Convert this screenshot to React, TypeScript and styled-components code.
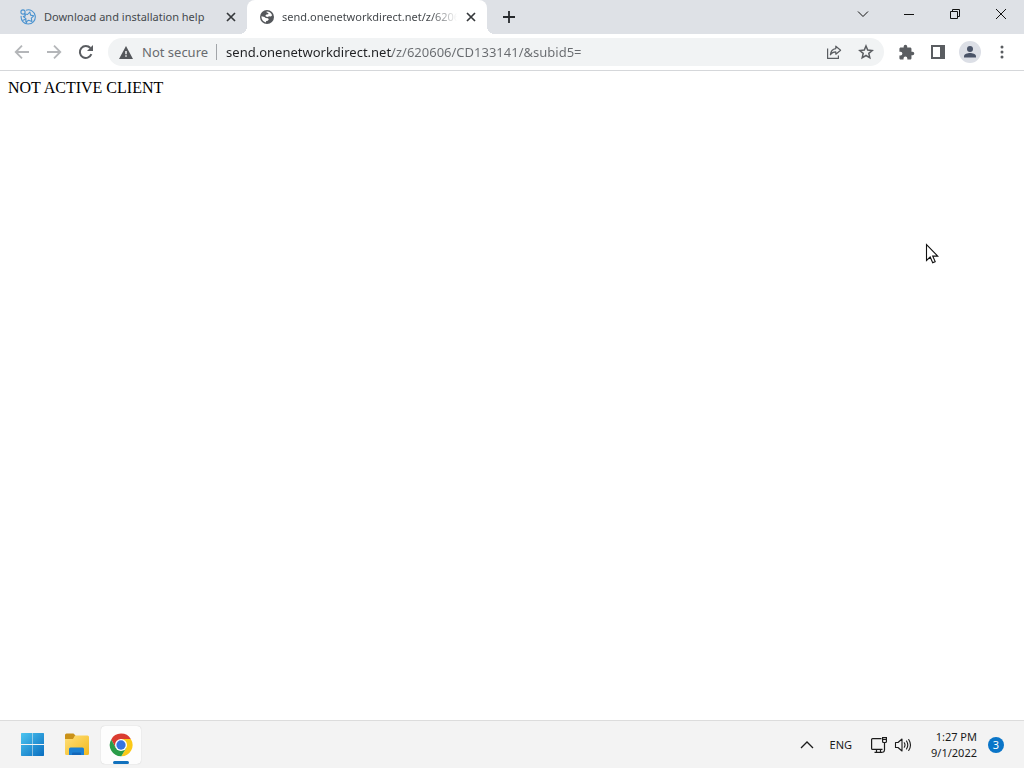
import React from "react";
import styled, { createGlobalStyle } from "styled-components";

const uiFont = `"Segoe UI", "Noto Sans", "Open Sans", sans-serif`;

const GlobalStyle = createGlobalStyle`
  * { box-sizing: border-box; }
  body { margin: 0; background: #fff; }
  button { font-family: inherit; }
`;

const Desktop = styled.div`
  display: flex;
  flex-direction: column;
  min-height: 100vh;
  font-family: ${uiFont};
  color: #202124;
`;

const TabStrip = styled.header`
  display: flex;
  height: 34px;
  background: #dee1e6;
`;

const TabList = styled.div`
  display: flex;
  flex: 1;
  min-width: 0;
  padding-left: 7px;
`;

const Tab = styled.div<{ $active?: boolean }>`
  position: relative;
  display: flex;
  align-items: center;
  width: 240px;
  padding: 0 8px 0 13px;
  border-radius: 8px 8px 0 0;
  background: ${(p) => (p.$active ? "#fff" : "transparent")};

  &::before,
  &::after {
    content: "";
    display: ${(p) => (p.$active ? "block" : "none")};
    position: absolute;
    bottom: 0;
    width: 8px;
    height: 8px;
  }
  &::before {
    left: -8px;
    background: radial-gradient(circle at 0 0, transparent 8px, #fff 8px);
  }
  &::after {
    right: -8px;
    background: radial-gradient(circle at 100% 0, transparent 8px, #fff 8px);
  }
`;

const TabTitle = styled.span<{ $fade?: boolean }>`
  flex: 1;
  min-width: 0;
  margin-left: 8px;
  overflow: hidden;
  white-space: nowrap;
  font-size: 11px;
  line-height: 16px;
  color: #45494d;
  ${(p) => p.$fade && "mask-image: linear-gradient(to right, #000 85%, transparent);"}
`;

const PlainButton = styled.button`
  display: flex;
  align-items: center;
  justify-content: center;
  flex: none;
  padding: 0;
  border: 0;
  background: transparent;
  color: inherit;
`;

const TabClose = styled(PlainButton)`
  width: 16px;
  height: 16px;
  margin-left: 6px;
`;

const NewTab = styled(PlainButton)`
  width: 28px;
  height: 34px;
  margin-left: 8px;
`;

const WindowButton = styled(PlainButton)`
  width: 46px;
  height: 28px;
  color: #111;
`;

const Toolbar = styled.nav`
  display: flex;
  align-items: center;
  height: 37px;
  padding: 0 6px;
  background: #fff;
  border-bottom: 1px solid #d5d7da;
`;

const ToolButton = styled(PlainButton)`
  width: 32px;
  height: 28px;
  color: #5a5d61;
  &:disabled { color: #b4b6b9; }
`;

const Omnibox = styled.form`
  display: flex;
  align-items: center;
  flex: 1;
  min-width: 0;
  height: 28px;
  margin: 0 6px;
  padding: 0 2px 0 11px;
  border-radius: 14px;
  background: #f1f3f4;
`;

const Security = styled(PlainButton)`
  gap: 9px;
  padding-right: 8px;
  font-size: 13px;
  line-height: 20px;
  color: #686b6f;
`;

const Divider = styled.span`
  width: 1px;
  height: 16px;
  margin-right: 9px;
  background: #a2a5a9;
`;

const Address = styled.input`
  flex: 1;
  min-width: 0;
  height: 20px;
  padding: 0;
  border: 0;
  outline: 0;
  font-family: inherit;
  font-size: 13px;
  line-height: 20px;
  color: #202124;
  background: linear-gradient(to right, #202124 166px, #686b6f 166px);
  background-clip: text;
  -webkit-text-fill-color: transparent;
`;

const Avatar = styled.span`
  display: flex;
  width: 22px;
  height: 22px;
  border-radius: 50%;
  background: #dcdfe6;
  color: #4a5468;
`;

const Page = styled.main`
  position: relative;
  flex: 1;
  padding: 8px;
  background: #fff;
  font: 16px/18px "Liberation Serif", "Times New Roman", serif;
  color: #000;
`;

const Pointer = styled.svg`
  position: absolute;
  top: 172px;
  right: 85px;
`;

const Taskbar = styled.footer`
  display: flex;
  align-items: center;
  justify-content: space-between;
  height: 48px;
  padding: 0 20px 0 13px;
  background: #f3f3f3;
  border-top: 1px solid #dcdcdc;
`;

const Apps = styled.div`
  display: flex;
  gap: 4px;
`;

const AppButton = styled(PlainButton)<{ $running?: boolean }>`
  position: relative;
  width: 40px;
  height: 38px;
  border-radius: 4px;
  background: ${(p) => (p.$running ? "#fdfdfd" : "transparent")};
  box-shadow: ${(p) => (p.$running ? "0 0 1px #bbb" : "none")};

  &::after {
    content: "";
    display: ${(p) => (p.$running ? "block" : "none")};
    position: absolute;
    bottom: 0;
    width: 16px;
    height: 3px;
    border-radius: 2px;
    background: #1171bd;
  }
`;

const Tray = styled.div`
  display: flex;
  align-items: center;
  color: #1b1b1b;
`;

const TrayButton = styled(PlainButton)`
  height: 38px;
  font-size: 11px;
  line-height: 16px;
`;

const Language = styled(TrayButton)`
  margin: 0 18px 0 16px;
`;

const QuickSettings = styled(TrayButton)`
  gap: 6px;
`;

const Clock = styled(TrayButton)`
  flex-direction: column;
  align-items: flex-end;
  margin: 0 11px 0 19px;
`;

const Count = styled(PlainButton)`
  width: 16px;
  height: 16px;
  border-radius: 50%;
  background: #0a75c8;
  color: #fff;
  font-size: 11px;
  line-height: 16px;
`;

const CloseGlyph = () => (
  <svg width="10" height="10" viewBox="0 0 10 10" stroke="#35383b" strokeWidth="1.7">
    <path d="M1 1l8 8M9 1L1 9" />
  </svg>
);

const SupportIcon = () => (
  <svg width="16" height="16" viewBox="0 0 16 16" fill="none" stroke="#4b93cf" strokeWidth="1.1" strokeLinejoin="round">
    <path d="M6 1.200A7.100 7.100 0 1 1 1.200 6.800" />
    <circle cx="3" cy="3" r="2.100" />
    <path d="M4.500 4.800l3 .7L9.800 3l.8 3.100 3.200.8-2.500 2.300.6 3.300-3.200-1.300-2.900 1.700.1-3.300-2.600-2.100 2.100-.6z" />
    <path d="M2.500 11.500l3.500-1.500M6 14.800l1-2.500" />
  </svg>
);

const GlobeIcon = () => (
  <svg width="14" height="14" viewBox="0 0 14 14">
    <circle cx="7" cy="7" r="7" fill="#54575b" />
    <path d="M6.500 1.600c2.600-.2 4.800 1.400 5.600 3.700l-1.200 1.300-2-.3-.9.700-2.200-.4-.3-1.300 1-.9 1.700-.2.200-1.200-1.700-.4z" fill="#fff" />
    <path d="M1.500 6.300l3 .6 1.200 1.200 2.200.1.900 1.100-1 1.500-1.600.3-.3 1.300C3.200 11.900 1.200 9.300 1.500 6.300z" fill="#fff" />
  </svg>
);

const BackIcon = () => (
  <svg width="16" height="16" viewBox="0 0 16 16" fill="none" stroke="currentColor" strokeWidth="1.8">
    <path d="M15 8H2M8 1.7L1.7 8 8 14.3" />
  </svg>
);

const ForwardIcon = () => (
  <svg width="16" height="16" viewBox="0 0 16 16" fill="none" stroke="currentColor" strokeWidth="1.8">
    <path d="M1 8h13M8 1.7L14.3 8 8 14.3" />
  </svg>
);

const ReloadIcon = () => (
  <svg width="16" height="16" viewBox="0 0 16 16">
    <path d="M13.4 10.2A6 6 0 1 1 12.4 4" fill="none" stroke="currentColor" strokeWidth="2" />
    <path d="M15 1v6H9z" fill="currentColor" />
  </svg>
);

const WarningIcon = () => (
  <svg width="14" height="13" viewBox="0 0 14 13">
    <path d="M7 0l7 13H0z" fill="#54575b" />
    <path d="M6.3 5h1.4v3.2H6.3zM6.3 9.3h1.4v1.5H6.3z" fill="#fff" />
  </svg>
);

const ShareIcon = () => (
  <svg width="16" height="16" viewBox="0 0 16 16" fill="none" stroke="currentColor" strokeWidth="1.2" strokeLinejoin="round">
    <path d="M1.6 4.5v9.9h10.8v-3" />
    <path d="M9.8 2.2l4.8 4-4.8 4V7.9c-2.6 0-4.2.9-5.4 2.9.3-3.4 2-5.7 5.4-6.2z" />
  </svg>
);

const StarIcon = () => (
  <svg width="16" height="16" viewBox="0 0 16 16" fill="none" stroke="currentColor" strokeWidth="1.5">
    <path d="M8 2l1.7 4.1 4.5.4-3.4 2.9 1 4.4L8 11.5l-3.8 2.3 1-4.4L1.8 6.5l4.5-.4z" />
  </svg>
);

const PuzzleIcon = () => (
  <svg width="17" height="17" viewBox="0 0 24 24" fill="currentColor">
    <path d="M20.5 11H19V7c0-1.1-.9-2-2-2h-4V3.500a2.500 2.500 0 0 0-5 0V5H4c-1.100 0-2 .9-2 2v3.800h1.500a2.700 2.700 0 0 1 0 5.400H2V20c0 1.100.9 2 2 2h3.800v-1.500a2.700 2.700 0 0 1 5.400 0V22H17c1.100 0 2-.9 2-2v-4h1.500a2.500 2.500 0 0 0 0-5z" />
  </svg>
);

const SidePanelIcon = () => (
  <svg width="14" height="14" viewBox="0 0 14 14">
    <path d="M1 1h12v12H1z" fill="none" stroke="currentColor" strokeWidth="2" />
    <path d="M9 0h5v14H9z" fill="currentColor" />
  </svg>
);

const PersonIcon = () => (
  <svg width="22" height="22" viewBox="0 0 22 22" fill="currentColor">
    <circle cx="11" cy="8" r="3" />
    <path d="M5 16.5v-1.3c0-2.2 3.6-3.2 6-3.2s6 1 6 3.2v1.3z" />
  </svg>
);

const MenuIcon = () => (
  <svg width="4" height="14" viewBox="0 0 4 14" fill="currentColor">
    <circle cx="2" cy="2" r="1.5" />
    <circle cx="2" cy="7" r="1.5" />
    <circle cx="2" cy="12" r="1.5" />
  </svg>
);

const WindowsIcon = () => (
  <svg width="24" height="24" viewBox="0 0 24 24">
    <defs>
      <linearGradient id="win" x1="0" y1="0" x2="24" y2="24" gradientUnits="userSpaceOnUse">
        <stop offset="0" stopColor="#4cc5f0" />
        <stop offset="1" stopColor="#0669bd" />
      </linearGradient>
    </defs>
    <path d="M.5 0h11v11H0V.5zM12 0h10.500l.5.5V11H12zM0 12h11.500v11H.5l-.5-.5zM12 12h11v10.500l-.5.5H12z" fill="url(#win)" />
  </svg>
);

const FolderIcon = () => (
  <svg width="26" height="24" viewBox="0 0 26 24">
    <defs>
      <linearGradient id="folder" x1="0" y1="0" x2="1" y2="1">
        <stop offset="0" stopColor="#ffe07a" />
        <stop offset="1" stopColor="#f3b91d" />
      </linearGradient>
    </defs>
    <path d="M1 2Q1 .5 2.500 .5h7l2 2-2 4H1z" fill="#c99119" />
    <path d="M1 6h8l2-3.500h12.500Q25 2.500 25 4v16.500q0 1.500-1.500 1.500h-21Q1 22 1 20.500z" fill="url(#folder)" />
    <path d="M5 22v-6Q5 14.500 6.500 14.500h12q1.500 0 1.500 1.500V22z" fill="#1b80d2" />
    <path d="M8 22v-1.500q0-1 1-1h7q1 0 1 1V22z" fill="#1266b8" />
  </svg>
);

const ChromeIcon = () => (
  <svg width="24" height="24" viewBox="0 0 48 48">
    <path d="M24 12h19.600A22.500 22.500 0 0 0 4.500 12.800L13.600 30z" fill="#da3c30" />
    <path d="M34.400 30l-9.800 16.500A22.500 22.500 0 0 0 43.600 12H24z" fill="#fbc918" />
    <path d="M13.600 30L4.500 12.800A22.500 22.500 0 0 0 24.600 46.500L34.400 30z" fill="#2a9c48" />
    <circle cx="24" cy="24" r="12" fill="#fff" />
    <circle cx="24" cy="24" r="9.300" fill="#3673df" />
  </svg>
);

const NetworkIcon = () => (
  <svg width="18" height="18" viewBox="0 0 18 18" fill="none" stroke="currentColor" strokeWidth="1.200">
    <path d="M11.500 2.600H2.600Q1.600 2.600 1.600 3.600v8.800q0 1 1 1h9.900M6.500 13.500v3M10.500 13.500v3M4.500 16.400h8" />
    <path d="M12.600 1.600h3.800v3.900q0 1-1 1h-1.800q-1 0-1-1zM12.600 3.500h3.800M14.500 6.500v7.500q0 2-2 2.400" />
  </svg>
);

const VolumeIcon = () => (
  <svg width="18" height="16" viewBox="0 0 18 16" fill="none" stroke="currentColor" strokeWidth="1.100" strokeLinecap="round" strokeLinejoin="round">
    <path d="M1.500 5.500h2.500l4-3.500v12l-4-3.500H1.500z" />
    <path d="M10.300 5.800q1.400 2.200 0 4.400M12.500 4q2.600 4 0 8M14.700 2.500q3.600 5.500 0 11" />
  </svg>
);

export default function App() {
  return (
    <Desktop>
      <GlobalStyle />
      <TabStrip>
        <TabList>
          <Tab>
            <SupportIcon />
            <TabTitle>Download and installation help</TabTitle>
            <TabClose aria-label="Close tab"><CloseGlyph /></TabClose>
          </Tab>
          <Tab $active>
            <GlobeIcon />
            <TabTitle $fade>send.onenetworkdirect.net/z/620606</TabTitle>
            <TabClose aria-label="Close tab"><CloseGlyph /></TabClose>
          </Tab>
          <NewTab aria-label="New tab">
            <svg width="12" height="12" viewBox="0 0 12 12" stroke="#26292c" strokeWidth="1.800">
              <path d="M6 0v12M0 6h12" />
            </svg>
          </NewTab>
        </TabList>
        <WindowButton aria-label="Search tabs">
          <svg width="12" height="8" viewBox="0 0 12 8" fill="none" stroke="currentColor">
            <path d="M1 1.500l5 5 5-5" />
          </svg>
        </WindowButton>
        <WindowButton aria-label="Minimize">
          <svg width="10" height="10" viewBox="0 0 10 10" stroke="currentColor">
            <path d="M0 5.500h10" />
          </svg>
        </WindowButton>
        <WindowButton aria-label="Restore">
          <svg width="10" height="10" viewBox="0 0 10 10" fill="none" stroke="currentColor">
            <path d="M.5 2.500h7v7h-7zM2.500 2.500v-2h7v7h-2" />
          </svg>
        </WindowButton>
        <WindowButton aria-label="Close">
          <svg width="10" height="10" viewBox="0 0 10 10" stroke="currentColor">
            <path d="M0 0l10 10M10 0L0 10" />
          </svg>
        </WindowButton>
      </TabStrip>

      <Toolbar>
        <ToolButton aria-label="Back" disabled><BackIcon /></ToolButton>
        <ToolButton aria-label="Forward" disabled><ForwardIcon /></ToolButton>
        <ToolButton aria-label="Reload"><ReloadIcon /></ToolButton>
        <Omnibox onSubmit={(e) => e.preventDefault()}>
          <Security type="button"><WarningIcon />Not secure</Security>
          <Divider />
          <Address
            type="text"
            aria-label="Address"
            spellCheck={false}
            defaultValue="send.onenetworkdirect.net/z/620606/CD133141/&subid5="
          />
          <ToolButton type="button" aria-label="Share"><ShareIcon /></ToolButton>
          <ToolButton type="button" aria-label="Bookmark"><StarIcon /></ToolButton>
        </Omnibox>
        <ToolButton aria-label="Extensions"><PuzzleIcon /></ToolButton>
        <ToolButton aria-label="Side panel"><SidePanelIcon /></ToolButton>
        <ToolButton aria-label="Profile"><Avatar><PersonIcon /></Avatar></ToolButton>
        <ToolButton aria-label="Menu"><MenuIcon /></ToolButton>
      </Toolbar>

      <Page>
        NOT ACTIVE CLIENT
        <Pointer width="14" height="21" viewBox="0 0 14 21">
          <path d="M1.500 1.500v16l3.700-3.500 2.500 5.700 2.500-1.100-2.500-5.500h5z" fill="#fff" stroke="#111" strokeWidth="1.100" />
        </Pointer>
      </Page>

      <Taskbar>
        <Apps>
          <AppButton aria-label="Start"><WindowsIcon /></AppButton>
          <AppButton aria-label="File Explorer"><FolderIcon /></AppButton>
          <AppButton aria-label="Google Chrome" $running><ChromeIcon /></AppButton>
        </Apps>
        <Tray>
          <TrayButton aria-label="Show hidden icons">
            <svg width="14" height="8" viewBox="0 0 14 8" fill="none" stroke="currentColor" strokeWidth="1.300">
              <path d="M1 7l6-6 6 6" />
            </svg>
          </TrayButton>
          <Language>ENG</Language>
          <QuickSettings aria-label="Network and volume"><NetworkIcon /><VolumeIcon /></QuickSettings>
          <Clock><span>1:27 PM</span><span>9/1/2022</span></Clock>
          <Count aria-label="3 notifications">3</Count>
        </Tray>
      </Taskbar>
    </Desktop>
  );
}
